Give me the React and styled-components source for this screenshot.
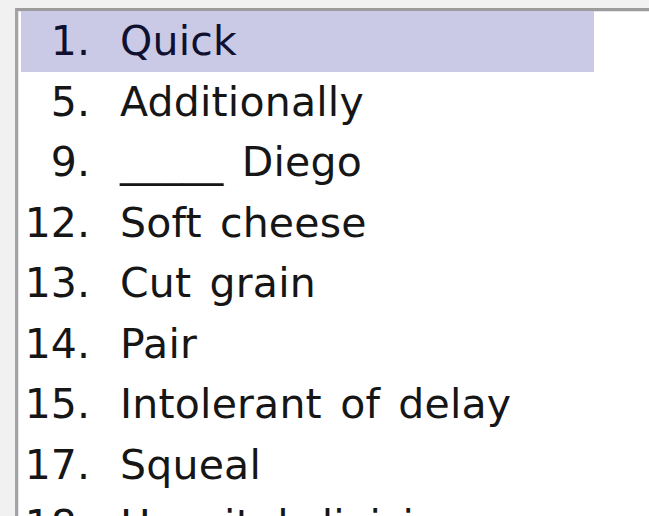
import React from "react";
import styled, { createGlobalStyle } from "styled-components";

const Global = createGlobalStyle`
  html, body {
    margin: 0;
    padding: 0;
    background: #f1f1f1;
    overflow: hidden;
  }
`;

const Page = styled.div`
  width: 649px;
  height: 516px;
  padding: 8px 0 0 15px;
  box-sizing: border-box;
  overflow: hidden;
`;

const Panel = styled.div`
  height: 100%;
  background: #ffffff;
  border-top: 3px solid #9c9c9c;
  border-left: 3px solid #a4a4a4;
  box-shadow: inset 1px 1px 0 #e4e4ea;
  padding: 0 0 0 3px;
  overflow: hidden;
`;

const List = styled.ul`
  list-style: none;
  margin: 0;
  padding: 0;
  width: 573px;
  font-family: "DejaVu Sans", Verdana, sans-serif;
  font-size: 41px;
  color: #161616;
`;

const Row = styled.li`
  display: flex;
  align-items: center;
  height: 60.5px;
  line-height: 60.5px;
  white-space: nowrap;
  background: ${(p) => (p.$selected ? "#cbcae6" : "transparent")};
  color: ${(p) => (p.$selected ? "#101030" : "#161616")};
`;

const Num = styled.span`
  width: 69px;
  text-align: right;
  flex: none;
`;

const Clue = styled.span`
  margin-left: 30px;
  letter-spacing: 0.2px;
  word-spacing: 5px;
`;

const clues = [
  { n: 1, text: "Quick" },
  { n: 5, text: "Additionally" },
  { n: 9, text: "_____ Diego" },
  { n: 12, text: "Soft cheese" },
  { n: 13, text: "Cut grain" },
  { n: 14, text: "Pair" },
  { n: 15, text: "Intolerant of delay" },
  { n: 17, text: "Squeal" },
  { n: 18, text: "Hospital division" },
];

export default function App() {
  return (
    <>
      <Global />
      <Page>
        <Panel>
          <List>
            {clues.map((c, i) => (
              <Row key={c.n} $selected={i === 0}>
                <Num>{c.n}.</Num>
                <Clue>{c.text}</Clue>
              </Row>
            ))}
          </List>
        </Panel>
      </Page>
    </>
  );
}
